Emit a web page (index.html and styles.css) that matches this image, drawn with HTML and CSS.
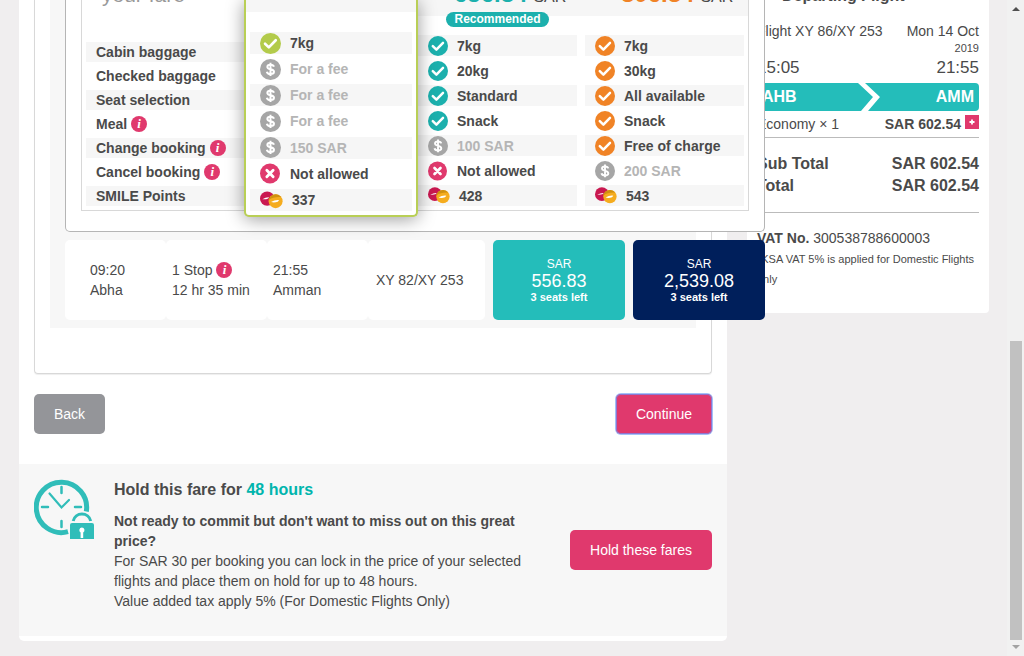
FILE: index.html
```
<!DOCTYPE html>
<html lang="en">
<head>
<meta charset="utf-8">
<title>Select your fare</title>
<link rel="stylesheet" href="styles.css">
</head>
<body>
<svg class="defs" aria-hidden="true">
  <symbol id="check" viewBox="0 0 20 20"><circle cx="10" cy="10" r="10" fill="currentColor"/><path d="M4.800 10.200l3.600 3.500 6.600-6.800" fill="none" stroke="#fff" stroke-width="2.500" stroke-linecap="round" stroke-linejoin="round"/></symbol>
  <symbol id="fee" viewBox="0 0 20 20"><circle cx="10" cy="10" r="10" fill="#a6a6a6"/><path d="M13.200 7.400C12.900 6 11.700 5.500 10 5.500 8.200 5.500 7 6.300 7 7.600 7 10.600 13.300 9 13.300 12.200 13.300 13.600 12 14.400 10 14.400 8 14.400 6.800 13.700 6.500 12.200M10 3.600V16.300" fill="none" stroke="#fff" stroke-width="1.900"/></symbol>
  <symbol id="cross" viewBox="0 0 20 20"><circle cx="9.500" cy="10" r="9.500" fill="#e0396d"/><path d="M6.500 7l6 6M12.500 7l-6 6" stroke="#fff" stroke-width="2.700" stroke-linecap="round"/></symbol>
  <symbol id="smile" viewBox="0 0 24 18"><circle cx="7.500" cy="7.500" r="7.500" fill="#c91850"/><path d="M2.500 8.200Q6 6 9.500 6.200L8.500 7.400Q6 8.600 2.500 8.200z" fill="#fff"/><circle cx="16.300" cy="10.200" r="7.300" fill="#f5ac1e"/><path d="M9.200 9a7.300 7.300 0 0 1 13-3C18 5.500 13 6 9.200 9z" fill="#cf900f"/><path d="M11.500 11.200Q15.500 8.700 20 9.200L18.500 10.800Q15 12.200 11.500 11.200z" fill="#fff"/></symbol>
</svg>
<div class="window">
<div class="page">
  <main class="panel">
    <section class="flights">
      <div class="options">
        <div class="fare-card">
          <div class="fare-table">
            <div class="labels">
              <div class="labels-head">your fare</div>
              <ul class="rows">
                <li>Cabin baggage</li>
                <li>Checked baggage</li>
                <li>Seat selection</li>
                <li>Meal <button class="info" aria-label="About meals">i</button></li>
                <li>Change booking <button class="info" aria-label="About changes">i</button></li>
                <li>Cancel booking <button class="info" aria-label="About cancellation">i</button></li>
                <li>SMILE Points</li>
              </ul>
            </div>
            <div class="selected">
              <div class="selected-head"></div>
              <ul class="rows features green">
                <li><svg><use href="#check"/></svg>7kg</li>
                <li class="off"><svg><use href="#fee"/></svg>For a fee</li>
                <li class="off"><svg><use href="#fee"/></svg>For a fee</li>
                <li class="off"><svg><use href="#fee"/></svg>For a fee</li>
                <li class="off"><svg><use href="#fee"/></svg>150 SAR</li>
                <li><svg><use href="#cross"/></svg>Not allowed</li>
                <li><svg class="coins"><use href="#smile"/></svg>337</li>
              </ul>
            </div>
            <div class="others">
              <div class="prices">
                <div class="price teal"><b>656.84</b> SAR</div>
                <div class="price orange"><b>806.84</b> SAR</div>
              </div>
              <div class="badges"><span class="badge">Recommended</span></div>
              <div class="pair">
                <ul class="rows features teal">
                  <li><svg><use href="#check"/></svg>7kg</li>
                  <li><svg><use href="#check"/></svg>20kg</li>
                  <li><svg><use href="#check"/></svg>Standard</li>
                  <li><svg><use href="#check"/></svg>Snack</li>
                  <li class="off"><svg><use href="#fee"/></svg>100 SAR</li>
                  <li><svg><use href="#cross"/></svg>Not allowed</li>
                  <li><svg class="coins"><use href="#smile"/></svg>428</li>
                </ul>
                <ul class="rows features orange">
                  <li><svg><use href="#check"/></svg>7kg</li>
                  <li><svg><use href="#check"/></svg>30kg</li>
                  <li><svg><use href="#check"/></svg>All available</li>
                  <li><svg><use href="#check"/></svg>Snack</li>
                  <li><svg><use href="#check"/></svg>Free of charge</li>
                  <li class="off"><svg><use href="#fee"/></svg>200 SAR</li>
                  <li><svg class="coins"><use href="#smile"/></svg>543</li>
                </ul>
              </div>
            </div>
          </div>
        </div>
        <div class="flight">
          <div class="cell first">09:20<br>Abha</div>
          <div class="cell"><span>1 Stop <button class="info" aria-label="About the stop">i</button></span>12 hr 35 min</div>
          <div class="cell">21:55<br>Amman</div>
          <div class="cell number">XY 82/XY 253</div>
          <button class="fare economy"><span>SAR</span><strong>556.83</strong><b>3 seats left</b></button>
          <button class="fare business"><span>SAR</span><strong>2,539.08</strong><b>3 seats left</b></button>
        </div>
      </div>
    </section>
    <div class="actions">
      <button class="btn back">Back</button>
      <button class="btn focused">Continue</button>
    </div>
    <section class="hold">
      <svg class="hold-icon" viewBox="0 0 60 60" aria-hidden="true">
        <g fill="none" stroke="#30bdb9">
          <path d="M34 52.700A25.200 25.200 0 1 1 52.300 32.500" stroke-width="5"/>
          <path d="M27.500 8v6M27.500 42v6M8 28h6M41 28h6" stroke-width="2.500" stroke-linecap="round"/>
          <path d="M15.500 14.500L27.500 28.500L35 21" stroke-width="2.200" stroke-linecap="round"/>
          <path d="M39.200 42a9 9 0 0 1 17.500 0" stroke-width="3"/>
        </g>
        <path d="M36 46q0-2 2-2h20q2 0 2 2v14H36z" fill="#30bdb9"/>
        <path d="M47.900 48.500a2.700 2.700 0 0 1 1.300 5V59h-2.600v-5.500a2.700 2.700 0 0 1 1.300-5z" fill="#fff"/>
      </svg>
      <div class="hold-text">
        <h2>Hold this fare for <span>48 hours</span></h2>
        <p><b>Not ready to commit but don't want to miss out on this great price?</b></p>
        <p>For SAR 30 per booking you can lock in the price of your selected flights and place them on hold for up to 48 hours.</p>
        <p>Value added tax apply 5% (For Domestic Flights Only)</p>
      </div>
      <button class="btn">Hold these fares</button>
    </section>
  </main>
  <aside class="summary">
    <div class="summary-head"><h2>Departing Flight</h2></div>
    <div class="line top"><span>Flight XY 86/XY 253</span><span class="date">Mon 14 Oct<small>2019</small></span></div>
    <div class="line times"><span>15:05</span><span>21:55</span></div>
    <div class="route"><span>AHB</span><svg viewBox="0 0 24 28" aria-hidden="true"><path d="M2 0H9L24 14 12 28H5L17 14z" fill="#fff"/></svg><span>AMM</span></div>
    <div class="line cabin"><span>Economy × 1</span><span class="amount"><b>SAR 602.54</b><button class="plus" aria-label="Show details"><svg viewBox="0 0 14 14"><path d="M7 4.500v5M4.500 7h5" stroke="#fff" stroke-width="1.800"/></svg></button></span></div>
    <div class="totals">
      <div class="line"><span>Sub Total</span><span>SAR 602.54</span></div>
      <div class="line"><span>Total</span><span>SAR 602.54</span></div>
    </div>
    <p class="vat"><b>VAT No.</b> 300538788600003</p>
    <p class="note">*KSA VAT 5% is applied for Domestic Flights only</p>
  </aside>
</div>
<div class="scrollbar" aria-hidden="true">
  <svg viewBox="0 0 8 4"><path d="M0 4L4 0l4 4z" fill="#505050"/></svg>
  <div class="thumb"></div>
  <svg viewBox="0 0 8 4"><path d="M0 0h8L4 4z" fill="#a3a3a3"/></svg>
</div>
</div>
</body>
</html>
```
FILE: styles.css
```
* { box-sizing: border-box; }
body {
  margin: 0;
  overflow: hidden;
  background: #f0eeef;
  color: #4a4a4a;
  font: 14px/20px "Liberation Sans", Arial, sans-serif;
}
h2, p, ul { margin: 0; padding: 0; }
ul { list-style: none; }
button { border: 0; padding: 0; font: inherit; color: #fff; cursor: pointer; }
.defs { display: none; }
.window { display: flex; height: 100vh; }
.page {
  flex: 1;
  display: grid;
  grid-template-columns: 708fr 242fr;
  gap: 20px;
  align-items: start;
  padding: 0 18px 0 19px;
}
.panel { min-width: 0; background: #fff; border-radius: 0 0 5px 5px; padding-bottom: 5px; }

.flights {
  margin: 0 15px;
  padding: 0 15px 45px;
  border: 1px solid #d8d8d8;
  border-top: 0;
  border-radius: 0 0 4px 4px;
  box-shadow: 0 1px 1px #eee;
}
.options { background: #f7f7f7; padding: 0 0 8px 15px; }

/* Fare comparison */
.fare-card {
  position: relative;
  z-index: 1;
  width: 700px;
  padding: 0 15px 20px;
  background: #fff;
  border: 1px solid #b5b5b5;
  border-top: 0;
  border-radius: 0 0 5px 5px;
}
.fare-table {
  display: grid;
  grid-template-columns: 158px 174px 1fr;
  padding-left: 4px;
  border: 1px solid #d8d8d8;
  border-top: 0;
}
.labels { padding-bottom: 4px; font-weight: bold; }
.labels-head {
  display: flex;
  align-items: flex-end;
  height: 7px;
  margin-bottom: 35px;
  padding-left: 16px;
  color: #999;
  font-weight: normal;
  font-size: 21px;
  line-height: 24px;
}
.rows { display: grid; font-weight: bold; }
.rows li { display: flex; align-items: center; }
.rows li:nth-child(odd) { background: #f6f6f6; }
.labels .rows { gap: 4px; }
.labels li { height: 20px; padding-left: 10px; gap: 4px; }
.info {
  display: inline-block;
  width: 16px;
  height: 16px;
  border-radius: 50%;
  background: #e0396d;
  font: italic bold 13px/16px "Liberation Serif", serif;
  text-align: center;
}

.selected {
  position: relative;
  display: flex;
  flex-direction: column;
  margin-bottom: -7px;
  padding-bottom: 4px;
  background: #fff;
  border: 2px solid #b9cf56;
  border-top: 0;
  border-radius: 0 0 5px 5px;
  box-shadow: 0 2px 18px rgba(0, 0, 0, .4);
}
.selected-head { height: 12px; margin-bottom: 20px; background: #f6f6f6; }
.selected .rows { flex: 1; margin: 0 4px; gap: 4px; }
.features li { padding-left: 10px; gap: 9px; height: 21px; }
.features svg { flex: none; width: 20px; height: 20px; }
.features .coins { width: 22px; height: 17px; }
.selected li { height: 22px; }
.selected svg { width: 21px; height: 21px; }
.selected .coins { width: 23px; height: 18px; }
.green { --tone: #b3cb4b; }
.teal { --tone: #1cb0ad; }
.orange { --tone: #f08326; }
.features svg { color: var(--tone); }
.rows .off { color: #b5b5b5; }

.prices, .pair, .badges { display: grid; grid-template-columns: 1fr 1fr; gap: 8px; padding-right: 4px; }
.prices { height: 16px; background: #f6f6f6; }
.price {
  display: flex;
  align-items: baseline;
  align-self: start;
  gap: 6px;
  height: 24px;
  margin-top: -18px;
  padding-left: 36px;
  font-size: 16px;
  line-height: 24px;
}
.price b { color: var(--tone); font-size: 24px; }
.badges { height: 19px; }
.badge {
  align-self: start;
  justify-self: center;
  margin-top: -4px;
  padding: 0 8px;
  border-radius: 8px;
  background: #1cb0ad;
  color: #fff;
  font: bold 12px/15px "Liberation Sans", Arial, sans-serif;
}
.pair .rows { gap: 4px; }

/* Flight row */
.flight { display: flex; width: 700px; height: 80px; margin-top: 8px; }
.cell {
  flex: 0 0 101px;
  padding: 20px 0 0 6px;
  border-radius: 5px;
  background: #fff;
  white-space: nowrap;
}
.cell span { display: flex; align-items: center; gap: 4px; }
.cell.first { padding-left: 25px; }
.cell.number { flex-basis: 117px; padding: 30px 0 0 8px; }
.fare {
  position: relative;
  z-index: 1;
  flex: 1;
  margin-left: 8px;
  padding-bottom: 1px;
  border-radius: 5px;
  font-size: 12px;
  line-height: 16px;
}
.fare span, .fare strong, .fare b { display: block; }
.fare strong { font-weight: normal; font-size: 18px; line-height: 18px; }
.fare b { font-size: 11px; line-height: 14px; }
.economy { background: #24bdba; }
.business { background: #001f5b; }

/* Buttons */
.actions { display: flex; justify-content: space-between; padding: 20px 15px 30px; }
.btn { flex: none; height: 40px; padding: 0 20px; border-radius: 5px; background: #e0396d; }
.back { background: #949599; }
.focused { box-shadow: 0 0 0 1px #a3c0f8, inset 0 0 0 1px #8f75cf; }

.hold {
  display: flex;
  align-items: center;
  padding: 15px 15px 25px;
  background: #f7f7f7;
}
.hold-icon { flex: none; align-self: flex-start; width: 60px; height: 60px; }
.hold-text { flex: 1; padding: 0 40px 0 20px; }
.hold .btn { margin-top: 10px; }
.hold h2 { margin-bottom: 10px; font-size: 16px; line-height: 22px; }
.hold h2 span { color: #00b5ad; }

/* Booking summary */
.summary { padding: 0 10px 24px; background: #fff; border-radius: 0 0 4px 4px; }
.summary-head { display: flex; align-items: flex-end; height: 6px; margin-bottom: 15px; padding-left: 25px; }
.summary-head h2 { font-size: 16px; line-height: 20px; }
.line { display: flex; justify-content: space-between; }
.date { text-align: right; }
.date small { display: block; font-size: 11px; line-height: 14px; }
.times { margin-bottom: 3px; font-size: 17px; line-height: 25px; }
.route {
  display: grid;
  grid-template-columns: 1fr 24px 1fr;
  align-items: center;
  height: 28px;
  padding: 0 5px;
  border-radius: 0 4px 4px 0;
  background: #24bdba;
  color: #fff;
  font-weight: bold;
  font-size: 16px;
}
.route svg { width: 24px; height: 28px; }
.route span:last-child { text-align: right; }
.cabin { padding: 3px 0; border-bottom: 1px solid #bbb; }
.amount { display: flex; gap: 4px; }
.plus { width: 14px; height: 14px; margin-top: 1px; background: #e0396d; }
.plus svg { display: block; }
.totals {
  margin-bottom: 15px;
  padding: 15px 0;
  border-bottom: 1px solid #bbb;
  font-weight: bold;
  font-size: 16px;
  line-height: 22px;
}
.vat { margin-bottom: 1px; }
.note { font-size: 11px; }

.scrollbar {
  flex: none;
  display: flex;
  flex-direction: column;
  justify-content: space-between;
  align-items: center;
  width: 17px;
  padding: 7px 0;
  background: #f1f1f1;
}
.scrollbar svg { width: 8px; height: 4px; }
.thumb { width: 12px; height: 299px; margin: auto 0 5px; background: #c1c1c1; }
```
